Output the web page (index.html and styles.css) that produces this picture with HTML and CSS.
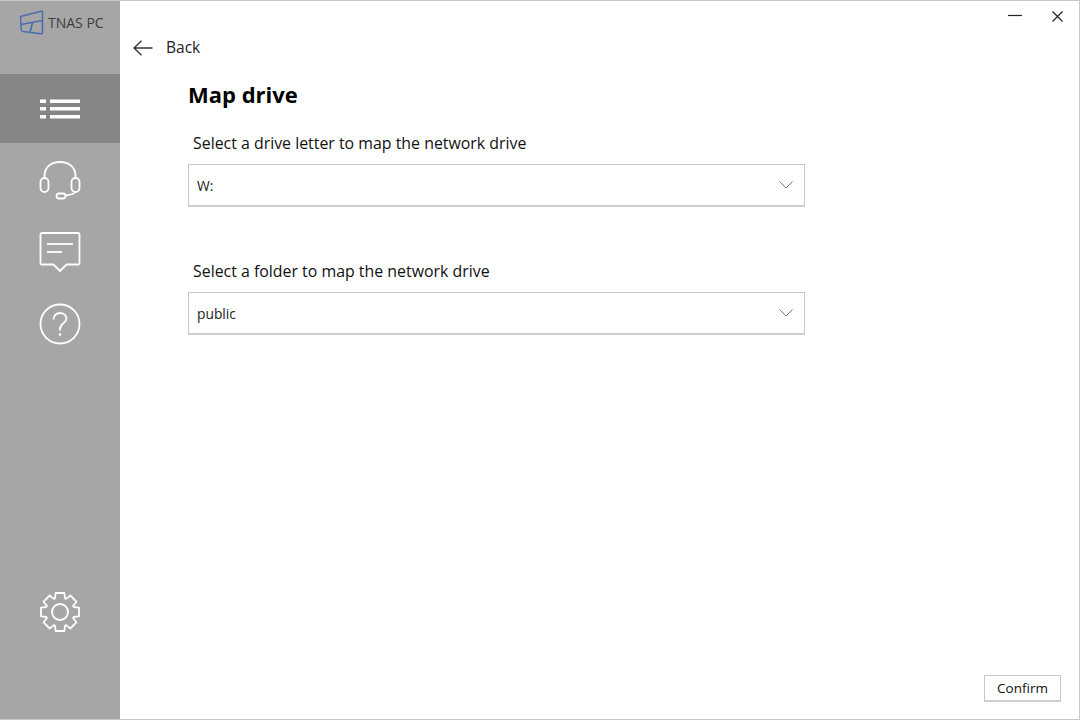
FILE: index.html
```html
<!DOCTYPE html>
<html lang="en">
<head>
    <meta charset="UTF-8">
    <title>TNAS PC</title>
    <link rel="stylesheet" href="styles.css">
</head>
<body>
    <div class="window">
        <!-- Sidebar -->
        <aside class="sidebar">
            <div class="brand">
                <svg class="brand-logo" width="26" height="26" viewBox="0 0 26 26" fill="none" stroke="#4a6db0" stroke-width="1.500" stroke-linejoin="round">
                    <path d="M1.500 6.500 L22 1.200 Q23.500 1 23.500 2.500 V22.500 Q23.500 24 22 23.800 L4 21.500 Q2.300 21.200 2.200 19.500 Z"/>
                    <path d="M2 14.500 L23.500 10.500"/>
                    <path d="M13.500 12.500 L11 22.500"/>
                </svg>
                <span>TNAS PC</span>
            </div>
            <a class="nav-item active" href="#">
                <svg width="40" height="20" viewBox="0 0 40 20" fill="#fff">
                    <rect x="0" y="0.500" width="6" height="3.500"/><rect x="10" y="0.500" width="30" height="3.500"/>
                    <rect x="0" y="8" width="6" height="3.500"/><rect x="10" y="8" width="30" height="3.500"/>
                    <rect x="0" y="16" width="6" height="3.500"/><rect x="10" y="16" width="30" height="3.500"/>
                </svg>
            </a>
            <a class="nav-item" href="#">
                <svg width="42" height="42" viewBox="0 0 42 42" fill="none" stroke="#fff" stroke-width="1.800">
                    <path d="M5.500 19 V17 C5.500 8 12 3 21 3 C30 3 36.500 8 36.500 17 V19"/>
                    <rect x="1.500" y="19" width="8" height="14" rx="4"/>
                    <rect x="32.500" y="19" width="8" height="14" rx="4"/>
                    <path d="M36 33 C35 35.500 31 35.500 26 37"/>
                    <rect x="17.500" y="34.500" width="9" height="5" rx="2.500"/>
                </svg>
            </a>
            <a class="nav-item" href="#">
                <svg width="42" height="42" viewBox="0 0 42 42" fill="none" stroke="#fff" stroke-width="1.800" stroke-linejoin="round">
                    <path d="M3 2 H39 Q40.500 2 40.500 3.500 V32 Q40.500 33.500 39 33.500 H27.500 L21 40 L14.500 33.500 H3 Q1.500 33.500 1.500 32 V3.500 Q1.500 2 3 2 Z"/>
                    <path d="M8 13 H34"/>
                    <path d="M8 21 H23"/>
                </svg>
            </a>
            <a class="nav-item" href="#">
                <svg width="42" height="42" viewBox="0 0 42 42" fill="none" stroke="#fff" stroke-width="1.800">
                    <circle cx="21" cy="21" r="19.500"/>
                    <path d="M14.500 16.500 C14.500 12.500 17.500 10 21 10 C24.500 10 27.500 12.500 27.500 15.500 C27.500 20 21 20.500 21 26 V27.500"/>
                    <circle cx="21" cy="31.500" r="1.300" fill="#fff" stroke="none"/>
                </svg>
            </a>
            <a class="nav-item settings" href="#">
                <svg width="42" height="42" viewBox="0 0 42 42" fill="none" stroke="#fff" stroke-width="1.800" stroke-linejoin="round">
                    <path d="M16 7.400 L16.600 2 H25.400 L26 7.400 L27.100 7.900 L31.300 4.500 L37.500 10.700 L34.100 14.900 L34.600 16 L40 16.600 V25.400 L34.600 26 L34.100 27.100 L37.500 31.300 L31.300 37.500 L27.100 34.100 L26 34.600 L25.400 40 H16.600 L16 34.600 L14.900 34.100 L10.700 37.500 L4.500 31.300 L7.900 27.100 L7.400 26 L2 25.400 V16.600 L7.400 16 L7.900 14.900 L4.500 10.700 L10.700 4.500 L14.900 7.900 Z"/>
                    <circle cx="21" cy="21" r="8"/>
                </svg>
            </a>
        </aside>

        <!-- Main Content -->
        <main class="content">
            <div class="window-controls">
                <svg width="14" height="14" viewBox="0 0 14 14" stroke="#222" stroke-width="1.200"><path d="M0 6.500 H14"/></svg>
                <svg width="11" height="11" viewBox="0 0 11 11" stroke="#222" stroke-width="1.200"><path d="M0.500 0.500 L10.500 10.500 M10.500 0.500 L0.500 10.500"/></svg>
            </div>
            <a class="back" href="#">
                <svg class="back-arrow" width="20" height="16" viewBox="0 0 20 16" fill="none" stroke="#333" stroke-width="1.300"><path d="M19.500 8 H1 M8.500 0.700 L1 8 L8.500 15.300"/></svg>
                <span>Back</span>
            </a>
            <div class="form">
                <h1>Map drive</h1>
                <label class="field-label">Select a drive letter to map the network drive</label>
                <div class="select">
                    <span>W:</span>
                    <svg width="14" height="8" viewBox="0 0 14 8" fill="none" stroke="#777" stroke-width="1"><path d="M0.500 0.500 L7 7 L13.500 0.500"/></svg>
                </div>
                <label class="field-label second">Select a folder to map the network drive</label>
                <div class="select">
                    <span>public</span>
                    <svg width="14" height="8" viewBox="0 0 14 8" fill="none" stroke="#777" stroke-width="1"><path d="M0.500 0.500 L7 7 L13.500 0.500"/></svg>
                </div>
            </div>
            <div class="actions">
                <button class="btn">Confirm</button>
            </div>
        </main>
    </div>
</body>
</html>
```

FILE: styles.css
```css
/* General Reset */
* {
    margin: 0;
    padding: 0;
    box-sizing: border-box;
}

body {
    font-family: "Open Sans", "Noto Sans", sans-serif;
    background: #fff;
    color: #111;
    width: 1080px;
    height: 720px;
    overflow: hidden;
}

.window {
    display: flex;
    height: 720px;
    border: 1px solid #c8c8c8;
    border-left: none;
}

/* Sidebar */
.sidebar {
    width: 120px;
    flex-shrink: 0;
    background: #a6a6a6;
    display: flex;
    flex-direction: column;
    height: 718px;
}

.brand {
    display: flex;
    align-items: center;
    height: 73px;
    padding: 0 0 30px 19px;
    font-size: 14px;
    color: #3d3d3d;
}

.brand span {
    margin-left: 3px;
}

.nav-item {
    height: 72px;
    display: flex;
    align-items: center;
    justify-content: center;
}

.nav-item.active {
    height: 69px;
    background: #868686;
    margin-bottom: 1px;
}

.nav-item.settings {
    margin-top: auto;
    margin-bottom: 71px;
}

/* Main Content */
.content {
    flex: 1;
    display: flex;
    flex-direction: column;
    height: 718px;
}

.window-controls {
    display: flex;
    justify-content: flex-end;
    align-items: center;
    gap: 30px;
    height: 30px;
    padding-right: 16px;
}

.back {
    display: flex;
    align-items: center;
    gap: 13px;
    margin: 6px 0 0 13px;
    height: 20px;
    font-size: 15.500px;
    color: #222;
    text-decoration: none;
}

.back-arrow {
    margin-top: 2px;
}

.form {
    width: 617px;
    margin: 22px 0 0 68px;
}

h1 {
    font-size: 22px;
    font-weight: 700;
    line-height: 30px;
    color: #000;
}

.field-label {
    display: block;
    font-size: 15.900px;
    line-height: 22px;
    margin: 23px 0 10px 5px;
    color: #111;
}

.field-label.second {
    margin-top: 53px;
}

.select {
    height: 43px;
    border: 1px solid #c8c8c8;
    border-bottom: 2px solid #cfcfcf;
    background: #fff;
    display: flex;
    align-items: center;
    justify-content: space-between;
    padding: 0 11px 0 8px;
    font-size: 13.800px;
    color: #222;
}

.actions {
    margin-top: auto;
    display: flex;
    justify-content: flex-end;
    padding: 0 18px 17px 0;
}

.btn {
    width: 77px;
    height: 27px;
    background: #fff;
    border: 1px solid #c8c8c8;
    border-bottom: 2px solid #cfcfcf;
    font-family: inherit;
    font-size: 13.500px;
    color: #111;
}
```
